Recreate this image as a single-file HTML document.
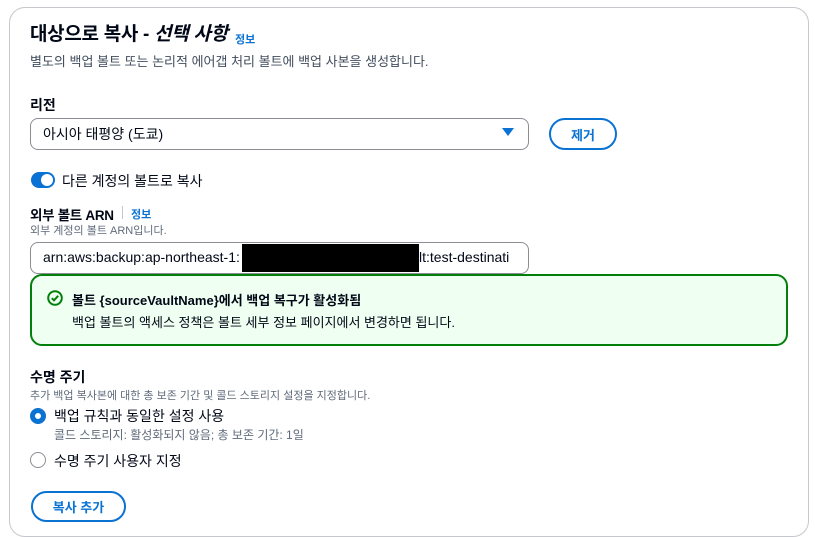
<!DOCTYPE html>
<html><head><meta charset="utf-8"><style>
*{box-sizing:border-box;margin:0;padding:0}
html,body{width:815px;height:537px;overflow:hidden}
body{background:#fff;font-family:"Liberation Sans","Noto Sans CJK KR",sans-serif;color:#000716;position:relative}
.a{position:absolute;white-space:nowrap}
.card{position:absolute;left:9px;top:7px;width:800px;height:530px;border:1px solid #c6c6cd;border-radius:16px}
.b{font-weight:700}
.lnk{color:#0972d3;font-weight:700;font-size:11px}
.box{position:absolute;border:1px solid #8c8c94;border-radius:8px;background:#fff}
.btn{position:absolute;border:2px solid #0972d3;border-radius:20px;color:#0972d3;font-weight:700;font-size:13px;display:flex;align-items:center;justify-content:center}
.g{color:#5f6b7a;font-size:12px}
</style></head><body>
<div class="card"></div>
<div class="a b" style="left:30px;top:22px;font-size:19px;line-height:26px;letter-spacing:-0.3px">대상으로 복사 - <i>선택 사항</i></div>
<div class="a lnk" style="left:235px;top:31px">정보</div>
<div class="a" style="left:30px;top:51px;font-size:13px;color:#414d5c">별도의 백업 볼트 또는 논리적 에어갭 처리 볼트에 백업 사본을 생성합니다.</div>
<div class="a b" style="left:30px;top:95px;font-size:14px">리전</div>
<div class="box" style="left:30px;top:118px;width:499px;height:32px"></div>
<div class="a" style="left:43px;top:124px;font-size:14px">아시아 태평양 (도쿄)</div>
<svg class="a" style="left:502px;top:128px" width="12" height="9"><path d="M0 0H12L6 8Z" fill="#0972d3"/></svg>
<div class="btn" style="left:549px;top:118px;width:68px;height:32px">제거</div>
<div class="a" style="left:31px;top:172px;width:24px;height:16px;border-radius:8px;background:#0972d3"></div>
<div class="a" style="left:41px;top:174px;width:12px;height:12px;border-radius:6px;background:#fff"></div>
<div class="a" style="left:62px;top:171px;font-size:14px">다른 계정의 볼트로 복사</div>
<div class="a b" style="left:30px;top:204px;font-size:13.5px;letter-spacing:-0.3px">외부 볼트 ARN</div>
<div class="a" style="left:122px;top:206px;width:1px;height:13px;background:#c6c6cd"></div>
<div class="a lnk" style="left:131px;top:206px">정보</div>
<div class="a g" style="left:30px;top:222px;font-size:11px">외부 계정의 볼트 ARN입니다.</div>
<div class="box" style="left:30px;top:242px;width:499px;height:32px"></div>
<div class="a" style="left:43px;top:249px;font-size:14px">arn:aws:backup:ap-northeast-1:</div>
<div class="a" style="left:419px;top:249px;font-size:14px;width:106px;overflow:hidden">lt:test-destinati</div>
<div class="a" style="left:242px;top:244px;width:177px;height:28px;background:#000"></div>
<div class="a" style="left:30px;top:274px;width:758px;height:72px;border:2px solid #037f0c;border-radius:12px;background:#effff1"></div>
<svg class="a" style="left:47px;top:290px" width="16" height="16"><circle cx="8" cy="8" r="6.8" fill="none" stroke="#037f0c" stroke-width="2"/><path d="M4.8 8.2L7 10.3L11.2 5.8" fill="none" stroke="#037f0c" stroke-width="2"/></svg>
<div class="a b" style="left:72px;top:290px;font-size:13px">볼트 {sourceVaultName}에서 백업 복구가 활성화됨</div>
<div class="a" style="left:72px;top:312px;font-size:13px">백업 볼트의 액세스 정책은 볼트 세부 정보 페이지에서 변경하면 됩니다.</div>
<div class="a b" style="left:30px;top:367px;font-size:14px">수명 주기</div>
<div class="a g" style="left:30px;top:387px;font-size:11px">추가 백업 복사본에 대한 총 보존 기간 및 콜드 스토리지 설정을 지정합니다.</div>
<div class="a" style="left:30px;top:408px;width:16px;height:16px;border-radius:8px;border:5px solid #0972d3"></div>
<div class="a" style="left:54px;top:406px;font-size:14px">백업 규칙과 동일한 설정 사용</div>
<div class="a g" style="left:54px;top:426px">콜드 스토리지: 활성화되지 않음; 총 보존 기간: 1일</div>
<div class="a" style="left:30px;top:452px;width:16px;height:16px;border-radius:8px;border:1.5px solid #8c8c94"></div>
<div class="a" style="left:54px;top:451px;font-size:14px">수명 주기 사용자 지정</div>
<div class="btn" style="left:31px;top:491px;width:95px;height:31px">복사 추가</div>
</body></html>
